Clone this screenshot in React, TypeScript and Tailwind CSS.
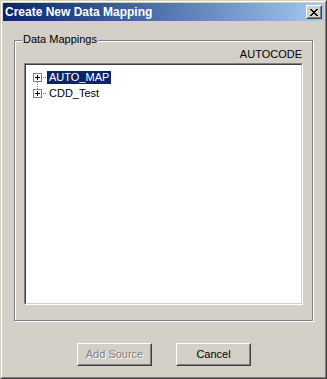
import React from 'react'

const font = { fontFamily: '"Liberation Sans", Arial, sans-serif' }

function PlusBox() {
  return (
    <svg width="9" height="9" viewBox="0 0 9 9" shapeRendering="crispEdges" className="shrink-0">
      <rect x="0.5" y="0.5" width="8" height="8" fill="#ffffff" stroke="#808080" />
      <rect x="2" y="4" width="5" height="1" fill="#000000" />
      <rect x="4" y="2" width="1" height="5" fill="#000000" />
    </svg>
  )
}

function Dots({ w }: { w: number }) {
  return (
    <svg width={w} height="1" className="shrink-0" shapeRendering="crispEdges">
      {Array.from({ length: Math.ceil(w / 2) }).map((_, i) => (
        <rect key={i} x={i * 2 + 1} y="0" width="1" height="1" fill="#808080" />
      ))}
    </svg>
  )
}

function TreeRow({ label, selected, last }: { label: string; selected?: boolean; last?: boolean }) {
  return (
    <div className="relative flex items-center h-[16px] pl-[7px]">
      {!last && (
        <svg width="1" height="8" className="absolute left-[11px] top-[12px]" shapeRendering="crispEdges">
          <rect x="0" y="1" width="1" height="1" fill="#808080" />
          <rect x="0" y="3" width="1" height="1" fill="#808080" />
          <rect x="0" y="5" width="1" height="1" fill="#808080" />
          <rect x="0" y="7" width="1" height="1" fill="#808080" />
        </svg>
      )}
      <PlusBox />
      <Dots w={5} />
      <span
        className={`h-[13px] leading-[13px] px-[2px] text-[11px] ${selected ? 'bg-[#0a246a] text-white' : 'text-black'}`}
      >
        {label}
      </span>
    </div>
  )
}

function Button({ label, disabled }: { label: string; disabled?: boolean }) {
  return (
    <div className="w-[75px] h-[23px] border border-t-white border-l-white border-r-[#404040] border-b-[#404040]">
      <div className="h-full border border-t-[#d4d0c8] border-l-[#d4d0c8] border-r-[#808080] border-b-[#808080] flex items-center justify-center">
        <span
          className={`text-[11px] leading-[13px] ${disabled ? 'text-[#808080] [text-shadow:1px_1px_0_#ffffff]' : 'text-black'}`}
        >
          {label}
        </span>
      </div>
    </div>
  )
}

export default function App() {
  return (
    <div style={font} className="w-[327px] h-[379px] bg-[#d4d0c8] border border-t-[#d4d0c8] border-l-[#d4d0c8] border-r-[#404040] border-b-[#404040]">
      <div className="h-full border border-t-white border-l-white border-r-[#808080] border-b-[#808080] p-[1px] flex flex-col">
        <div className="h-[18px] shrink-0 flex items-center justify-between bg-gradient-to-r from-[#0a246a] to-[#a6caf0] pl-[2px] pr-[2px]">
          <span className="text-white font-bold text-[12px] leading-[14px]">Create New Data Mapping</span>
          <div className="w-[16px] h-[14px] border border-t-white border-l-white border-r-[#404040] border-b-[#404040] bg-[#d4d0c8]">
            <div className="w-full h-full border border-t-[#d4d0c8] border-l-[#d4d0c8] border-r-[#808080] border-b-[#808080] flex items-center justify-center">
              <svg width="8" height="7" viewBox="0 0 8 7" shapeRendering="crispEdges">
                <path d="M0 0h2v1h1v1h2v-1h1v-1h2v1h-1v1h-1v1h-1v1h1v1h1v1h1v1h-2v-1h-1v-1h-2v1h-1v1h-2v-1h1v-1h1v-1h1v-1h-1v-1h-1v-1h-1z" fill="#000000" />
              </svg>
            </div>
          </div>
        </div>

        <div className="relative mt-[19px] ml-[11px] w-[299px] h-[281px] border border-[#808080] shadow-[inset_1px_1px_0_#ffffff,1px_1px_0_#ffffff] flex flex-col px-[9px] pt-[7px] pb-[15px]">
          <span className="absolute left-[7px] top-[-8px] bg-[#d4d0c8] px-[1px] text-[11px] leading-[13px] text-black">
            Data Mappings
          </span>
          <div className="text-right text-[11px] leading-[13px] text-black pr-[1px]">AUTOCODE</div>
          <div className="mt-[2px] flex-1 border border-t-[#808080] border-l-[#808080] border-r-white border-b-white">
            <div className="h-full bg-white border border-t-[#404040] border-l-[#404040] border-r-[#d4d0c8] border-b-[#d4d0c8] pt-[4px]">
              <TreeRow label="AUTO_MAP" selected />
              <TreeRow label="CDD_Test" last />
            </div>
          </div>
        </div>

        <div className="mt-[22px] flex justify-center gap-[24px] pl-[1px]">
          <Button label="Add Source" disabled />
          <Button label="Cancel" />
        </div>
      </div>
    </div>
  )
}
